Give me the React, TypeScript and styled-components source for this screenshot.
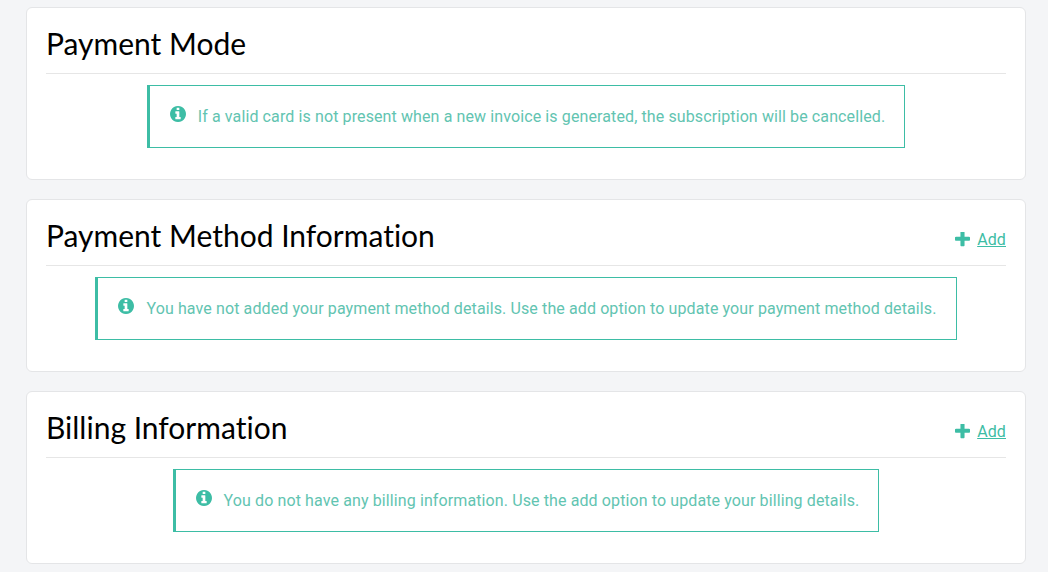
import React from "react";
import styled, { createGlobalStyle } from "styled-components";

const Global = createGlobalStyle`
  html, body { margin: 0; padding: 0; background: #f4f5f7; }
  body { font-family: Roboto, "Liberation Sans", sans-serif; overflow: hidden; }
`;

const Page = styled.main`
  display: flex;
  flex-direction: column;
  gap: 19px;
  width: 1000px;
  padding: 7px 22px 0 26px;
`;

const Card = styled.section`
  box-sizing: border-box;
  height: 173px;
  padding: 0 19px;
  background: #fff;
  border: 1px solid #e4e5e7;
  border-radius: 6px;
`;

const Header = styled.header`
  display: flex;
  justify-content: space-between;
  align-items: flex-end;
  height: 65px;
  border-bottom: 1px solid #e6e6e6;
`;

const Title = styled.h2`
  margin: 0 0 11px 0;
  font-family: Lato, sans-serif;
  font-size: 30px;
  line-height: 38px;
  font-weight: 400;
  color: #000;
  font-variant-ligatures: none;
`;

const AddLink = styled.a`
  display: flex;
  align-items: center;
  gap: 7px;
  margin-bottom: 16px;
  font-size: 16px;
  line-height: 19px;
  letter-spacing: 0.11px;
  color: #3dbda5;
  text-decoration: underline;
`;

const PlusIcon = styled.svg`
  width: 15px;
  height: 15px;
  flex: none;
  fill: #3dbda5;
`;

const Body = styled.div`
  display: flex;
  justify-content: center;
  padding-top: 11px;
`;

const Alert = styled.div`
  box-sizing: border-box;
  display: flex;
  align-items: flex-start;
  gap: 12px;
  height: 63px;
  padding: 20px 19px 0 20px;
  border: 1px solid #3dbda5;
  border-left-width: 3px;
  color: #62c4b1;
  font-size: 16px;
  line-height: 22px;
  letter-spacing: 0.11px;
`;

const InfoIcon = styled.svg`
  width: 16px;
  height: 16px;
  flex: none;
  fill: #3dbda5;
`;

const Message = styled.span`
  white-space: nowrap;
`;

const sections = [
  { title: "Payment Mode", add: false, text: "If a valid card is not present when a new invoice is generated, the subscription will be cancelled." },
  { title: "Payment Method Information", add: true, text: "You have not added your payment method details. Use the add option to update your payment method details." },
  { title: "Billing Information", add: true, text: "You do not have any billing information. Use the add option to update your billing details." },
];

export default function App() {
  return (
    <Page>
      <Global />
      {sections.map((s) => (
        <Card key={s.title}>
          <Header>
            <Title>{s.title}</Title>
            {s.add && (
              <AddLink href="#">
                <PlusIcon viewBox="192 192 1408 1408">
                  <path d="M1600 736v192q0 40-28 68t-68 28h-416v416q0 40-28 68t-68 28h-192q-40 0-68-28t-28-68v-416h-416q-40 0-68-28t-28-68v-192q0-40 28-68t68-28h416v-416q0-40 28-68t68-28h192q40 0 68 28t28 68v416h416q40 0 68 28t28 68z" />
                </PlusIcon>
                Add
              </AddLink>
            )}
          </Header>
          <Body>
            <Alert>
              <InfoIcon viewBox="128 128 1536 1536">
                <path d="M1152 1376v-160q0-14-9-23t-23-9h-96v-512q0-14-9-23t-23-9h-320q-14 0-23 9t-9 23v160q0 14 9 23t23 9h96v320h-96q-14 0-23 9t-9 23v160q0 14 9 23t23 9h448q14 0 23-9t9-23zm-128-896v-160q0-14-9-23t-23-9h-192q-14 0-23 9t-9 23v160q0 14 9 23t23 9h192q14 0 23-9t9-23zm640 416q0 209-103 385.5t-279.5 279.5-385.5 103-385.5-103-279.5-279.5-103-385.5 103-385.5 279.5-279.5 385.5-103 385.5 103 279.5 279.5 103 385.5z" />
              </InfoIcon>
              <Message>{s.text}</Message>
            </Alert>
          </Body>
        </Card>
      ))}
    </Page>
  );
}
